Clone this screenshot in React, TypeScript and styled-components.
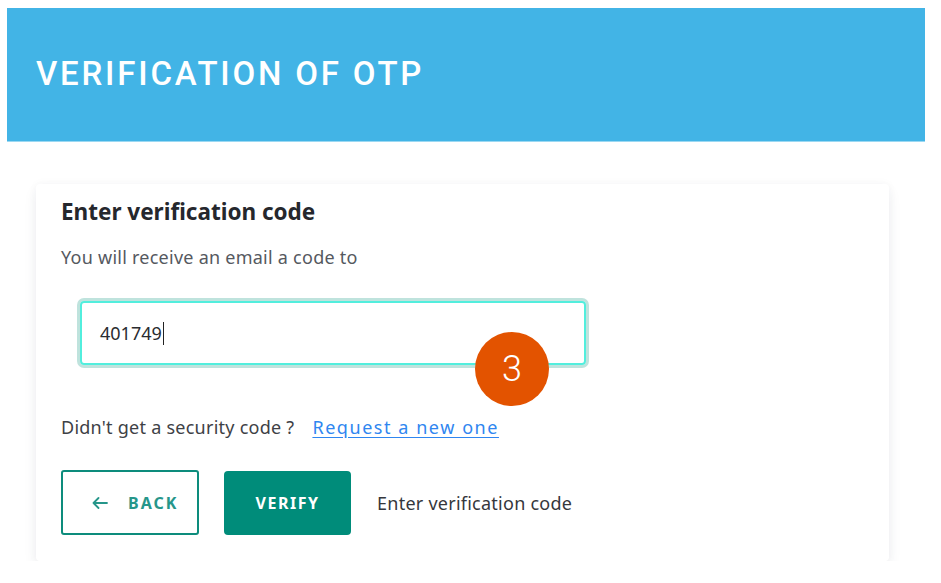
import React from "react";
import styled, { createGlobalStyle } from "styled-components";

const Global = createGlobalStyle`
  html, body { margin: 0; padding: 0; background: #ffffff; }
  body { font-family: "Noto Sans", "Liberation Sans", sans-serif; }
  * { box-sizing: border-box; }
`;

const Page = styled.div`
  padding: 8px 16px 0 7px;
  display: flex;
  flex-direction: column;
`;

const Header = styled.header`
  height: 134px;
  background: #42b4e6;
  border-bottom: 1px solid #9bd8f2;
  display: flex;
  align-items: center;
  padding: 0 0 3px 29px;
`;

const HeaderTitle = styled.h1`
  margin: 0;
  color: #ffffff;
  font-family: Roboto, "Liberation Sans", sans-serif;
  font-weight: 500;
  font-size: 33px;
  letter-spacing: 2.8px;
`;

const Content = styled.main`
  padding: 42px 36px 0 29px;
`;

const Card = styled.section`
  background: #ffffff;
  border-radius: 4px;
  box-shadow: 0 7px 14px rgba(40, 50, 80, 0.07), 0 0 10px rgba(40, 50, 80, 0.04);
  padding: 15px 25px 26px 25px;
  display: flex;
  flex-direction: column;
`;

const CardTitle = styled.h2`
  margin: 0;
  font-size: 22.5px;
  font-weight: 700;
  color: #25272d;
  line-height: 26px;
`;

const Subtitle = styled.p`
  margin: 21px 0 0 0;
  font-size: 18px;
  letter-spacing: 0.25px;
  color: #55595f;
  line-height: 22px;
`;

const FieldWrap = styled.div`
  margin: 33px 0 0 19px;
  width: 506px;
  position: relative;
`;

const CodeInput = styled.div`
  height: 64px;
  border: 2px solid #52eedd;
  border-radius: 4px;
  box-shadow: 0 0 0 3px #bfe3dd;
  display: flex;
  align-items: center;
  padding: 0 18px;
  font-size: 18px;
  color: #2a2c30;
`;

const Caret = styled.span`
  display: inline-block;
  width: 1px;
  height: 23px;
  background: #222;
  margin-left: 1px;
`;

const Badge = styled.div`
  position: absolute;
  left: 395px;
  top: 31px;
  width: 74px;
  height: 74px;
  border-radius: 50%;
  background: #e35300;
  color: #ffffff;
  display: flex;
  align-items: center;
  justify-content: center;
  font-family: Roboto, "Liberation Sans", sans-serif;
  font-size: 36px;
  font-weight: 300;
`;

const HelpRow = styled.div`
  margin-top: 50px;
  display: flex;
  align-items: baseline;
  gap: 18px;
  font-size: 18px;
  letter-spacing: 0.25px;
  line-height: 24px;
  color: #3e4146;
`;

const Link = styled.a`
  color: #2f86f0;
  font-size: 18px;
  letter-spacing: 1.55px;
  text-decoration: underline;
  text-underline-offset: 3px;
`;

const Actions = styled.div`
  margin-top: 31px;
  display: flex;
  align-items: center;
  gap: 25px;
`;

const OutlineButton = styled.button`
  width: 138px;
  height: 65px;
  border: 2px solid #0d8c7c;
  border-radius: 3px;
  background: #ffffff;
  color: #26968a;
  font-family: inherit;
  font-size: 16px;
  font-weight: 700;
  letter-spacing: 2px;
  display: flex;
  align-items: center;
  justify-content: flex-start;
  padding: 0 0 0 29px;
  gap: 20px;
`;

const SolidButton = styled.button`
  width: 127px;
  height: 64px;
  border: none;
  border-radius: 4px;
  background: #008c7a;
  color: #ffffff;
  font-family: inherit;
  font-size: 16px;
  font-weight: 700;
  letter-spacing: 1.5px;
`;

const Hint = styled.span`
  font-size: 18px;
  letter-spacing: 0.25px;
  color: #35373c;
  margin-left: 1px;
`;

export default function App() {
  return (
    <>
      <Global />
      <Page>
        <Header>
          <HeaderTitle>VERIFICATION OF OTP</HeaderTitle>
        </Header>
        <Content>
          <Card>
            <CardTitle>Enter verification code</CardTitle>
            <Subtitle>You will receive an email a code to</Subtitle>
            <FieldWrap>
              <CodeInput>
                401749
                <Caret />
              </CodeInput>
              <Badge>3</Badge>
            </FieldWrap>
            <HelpRow>
              <span>Didn't get a security code ?</span>
              <Link href="#">Request a new one</Link>
            </HelpRow>
            <Actions>
              <OutlineButton>
                <svg width="16" height="12" viewBox="0 0 16 12" fill="none" stroke="#26968a" strokeWidth="1.8" strokeLinecap="round" strokeLinejoin="round">
                  <path d="M15 6H1.5M6.5 1L1.5 6l5 5" />
                </svg>
                BACK
              </OutlineButton>
              <SolidButton>VERIFY</SolidButton>
              <Hint>Enter verification code</Hint>
            </Actions>
          </Card>
        </Content>
      </Page>
    </>
  );
}
